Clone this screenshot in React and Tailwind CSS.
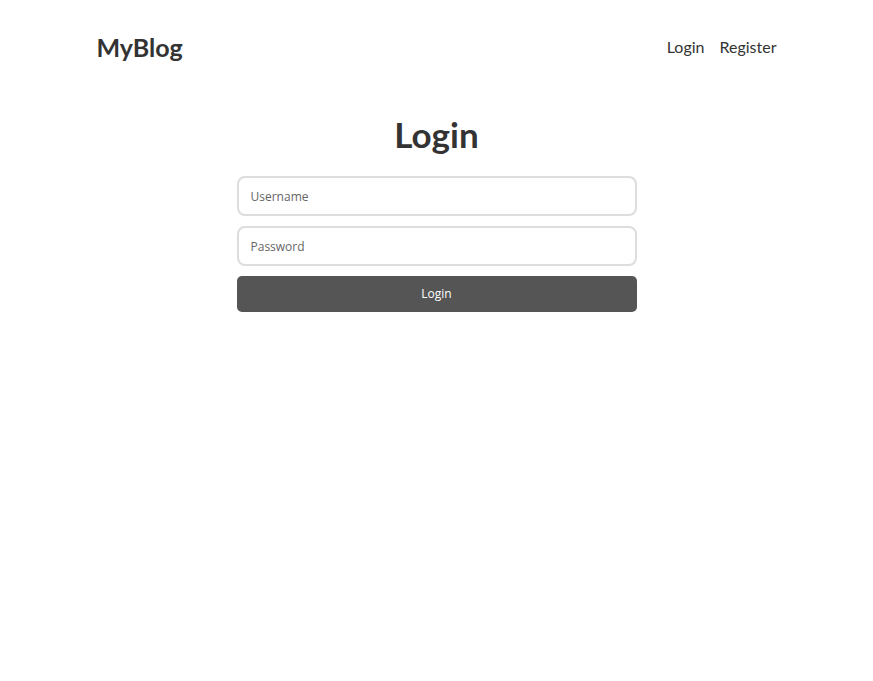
export default function App() {
  return (
    <div className="min-h-screen bg-white text-[#333] font-['Lato','Open_Sans',sans-serif]">
      <header className="mx-auto flex w-[680px] items-center justify-between pt-[31px] pb-[20px]">
        <h1 className="text-[25px] font-bold leading-[32px] text-[#333]">MyBlog</h1>
        <nav className="flex gap-[15px] text-[16px] text-[#333]">
          <a href="#">Login</a>
          <a href="#">Register</a>
        </nav>
      </header>
      <main className="mx-auto flex w-[400px] flex-col items-center pt-[29px]">
        <h2 className="mb-[20px] text-[35px] font-bold leading-[44px] text-[#333]">Login</h2>
        <form className="flex w-full flex-col gap-[10px] font-['Open_Sans',sans-serif]">
          <input
            type="text"
            placeholder="Username"
            className="h-[40px] w-full rounded-[8px] border-2 border-[#ddd] px-[12px] text-[12px] placeholder:text-[#666] outline-none"
          />
          <input
            type="password"
            placeholder="Password"
            className="h-[40px] w-full rounded-[8px] border-2 border-[#ddd] px-[12px] text-[12px] placeholder:text-[#666] outline-none"
          />
          <button
            type="button"
            className="h-[36px] w-full rounded-[5px] bg-[#555] text-[12px] text-white"
          >
            Login
          </button>
        </form>
      </main>
    </div>
  )
}
